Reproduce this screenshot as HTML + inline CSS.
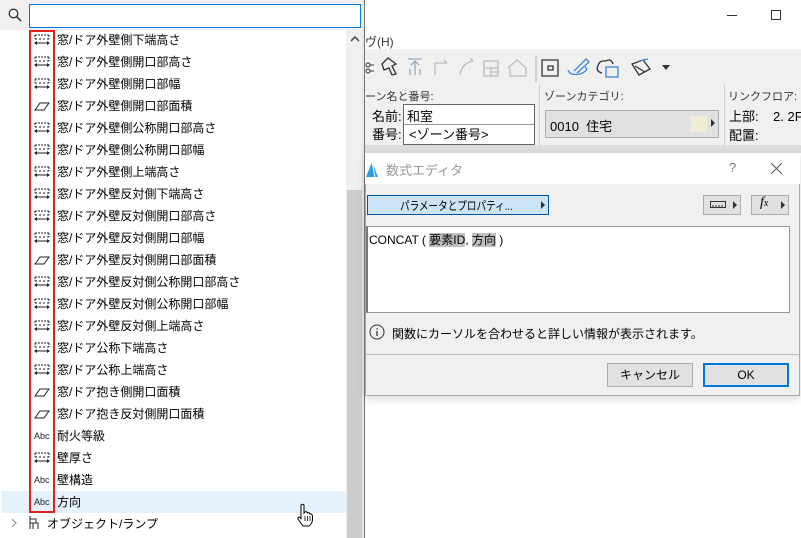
<!DOCTYPE html>
<html><head><meta charset="utf-8"><style>
*{margin:0;padding:0;box-sizing:border-box}
body{width:801px;height:538px;overflow:hidden;background:#fff;position:relative;font-family:"Liberation Sans","Noto Sans CJK JP",sans-serif;font-size:12px;color:#000}
.a{position:absolute}
.row{position:absolute;left:2px;width:344px;height:22px;line-height:22px}
.row span{position:absolute;left:55px;top:0;white-space:nowrap}
.ic{position:absolute;left:31px;top:4px;width:18px;height:14px}
.abc{position:absolute;left:32px;top:0;font-size:9px;color:#222}
.t{white-space:nowrap}
</style></head><body>
<div class="a" style="left:0;top:0;width:363px;height:30px;background:#f0f0f0"></div>
<svg class="a" style="left:8px;top:8px" width="14" height="14"><circle cx="5.5" cy="5.5" r="4.3" fill="none" stroke="#333" stroke-width="1.3"/><line x1="8.7" y1="8.7" x2="13" y2="13" stroke="#333" stroke-width="1.5"/></svg>
<div class="a" style="left:29px;top:4px;width:332px;height:24px;border:1px solid #0078d7;background:#fff"></div>
<div class="a" style="left:346px;top:30px;width:16px;height:508px;background:#f0f0f0"></div>
<div class="a" style="left:347px;top:190px;width:15px;height:348px;background:#cdcdcd"></div>
<svg class="a" style="left:350px;top:35px" width="10" height="8"><path d="M1 6 L5 2 L9 6" fill="none" stroke="#555" stroke-width="1.6"/></svg>
<div id="list"></div>
<div class="a" style="left:2px;top:491px;width:344px;height:22px;background:#e5f1fb"></div>
<div class="a" style="left:29px;top:30px;width:26px;height:483px;border:2px solid #e02020"></div>
<svg class="a" style="left:10px;top:518px" width="8" height="10"><path d="M2 1 L6 5 L2 9" fill="none" stroke="#999" stroke-width="1.2"/></svg>
<svg class="a" style="left:27px;top:515px" width="14" height="16"><path d="M3 1 V14 M3 8 H11 V14 M3 4 H9 V8 M6 8 V14" fill="none" stroke="#333" stroke-width="1.1"/></svg>
<div class="a t" style="left:47px;top:515px">オブジェクト/ランプ</div>
<svg class="a" style="left:296px;top:503px" width="18" height="24"><path d="M5 2 Q6.5 0.5 8 2 V10 L9 9 Q10.5 8 11.5 10 Q13 9 14 11 Q16 10.5 16.5 13 V17 Q16 21 13 23 H7 L2 16 Q1.5 14 3.5 14 L5 15.5 Z" fill="#fff" stroke="#000" stroke-width="1"/><path d="M9 13 V18 M11.5 13 V18 M14 13 V18" stroke="#000" stroke-width=".8"/></svg>
<div class="a" style="left:362px;top:0;width:2px;height:538px;background:#e8e8e8"></div>
<div class="a" style="left:364px;top:0;width:1px;height:538px;background:#777"></div>
<div class="a" style="left:727px;top:15px;width:10px;height:1px;background:#333"></div>
<div class="a" style="left:771px;top:10px;width:10px;height:10px;border:1px solid #333"></div>
<div class="a t" style="left:365px;top:33px;color:#333">ヴ(H)</div>
<div class="a" style="left:365px;top:49px;width:436px;height:36px;background:#f0f0f0"></div>
<svg class="a" style="left:365px;top:62px" width="10" height="12"><circle cx="3" cy="3" r="2" fill="none" stroke="#333"/><circle cx="3" cy="9" r="2" fill="none" stroke="#333"/><path d="M5 3H9M5 9H9" stroke="#333"/></svg>
<svg class="a" style="left:380px;top:56px" width="290" height="26" fill="none" stroke-width="1.3">
<path d="M2 8 L8 2 L16 8 L12 10 L16 18 L12 19 L9 12 L4 14 Z" stroke="#333"/>
<path d="M28 3 H42 M35 6 V19 M31 9 L35 5 L39 9 M30 13 V19 M40 13 V19" stroke="#9ab"/>
<path d="M55 19 V7 H67 M64 4 L67 7" stroke="#bbb"/>
<path d="M80 19 Q82 7 93 5 M90 2 L93 5" stroke="#bbb"/>
<path d="M104 5 H118 V20 H104 Z M104 12 H118 M111 12 V20 M112 16 H119" stroke="#bbb"/>
<path d="M128 12 L137 4 L146 12 V20 H130 V12" stroke="#bbb"/>
<line x1="156" y1="0" x2="156" y2="26" stroke="#bbb"/>
<path d="M162 4 H178 V20 H162 Z M168 10 H173 V14 H168 Z" stroke="#333"/>
<path d="M188 14 Q190 20 200 18 Q210 14 205 11 M194 15 L206 3 L209 6 L197 17" stroke="#3a86d8"/>
<path d="M222 17 Q215 15 218 10 Q219 4 226 5 Q231 2 233 8" stroke="#333"/><rect x="226" y="11" width="12" height="10" stroke="#3a86d8"/>
<path d="M252 8 L263 4 L270 13 L259 19 Z M255 10 L265 16" stroke="#333"/><path d="M259 5 L268 3" stroke="#3a86d8"/>
<path d="M282 9 L290 9 L286 14 Z" fill="#333" stroke="none"/>
</svg>
<div class="a" style="left:365px;top:85px;width:436px;height:62px;background:#f0f0f0"></div>
<div class="a t" style="left:365px;top:88px;font-size:11px;color:#333">ーン名と番号:</div>
<div class="a t" style="left:372px;top:106px;font-size:13px">名前:</div>
<div class="a t" style="left:372px;top:124px;font-size:13px">番号:</div>
<div class="a" style="left:403px;top:104px;width:132px;height:41px;border:1px solid #666;background:#fff"></div>
<div class="a" style="left:404px;top:124px;width:130px;height:1px;background:#999"></div>
<div class="a t" style="left:407px;top:106px;font-size:13px">和室</div>
<div class="a t" style="left:409px;top:124px;font-size:13px">&lt;ゾーン番号&gt;</div>
<div class="a" style="left:539px;top:85px;width:1px;height:60px;background:#ccc"></div>
<div class="a t" style="left:544px;top:88px;font-size:11px;color:#333">ゾーンカテゴリ:</div>
<div class="a" style="left:545px;top:110px;width:174px;height:28px;background:#e1e1e1;border:1px solid #adadad"></div>
<div class="a t" style="left:550px;top:116px;font-size:13px">0010&nbsp; 住宅</div>
<div class="a" style="left:691px;top:116px;width:16px;height:16px;background:#f1ecd4"></div>
<div class="a" style="left:711px;top:119px;border-left:4px solid #333;border-top:4px solid transparent;border-bottom:4px solid transparent"></div>
<div class="a" style="left:724px;top:85px;width:1px;height:60px;background:#ccc"></div>
<div class="a t" style="left:728px;top:88px;font-size:11px;color:#333">リンクフロア:</div>
<div class="a t" style="left:729px;top:106px;font-size:13px">上部:&nbsp;&nbsp;&nbsp;&nbsp;2. 2F</div>
<div class="a t" style="left:729px;top:125px;font-size:13px">配置:</div>
<div class="a" style="left:365px;top:145px;width:436px;height:8px;background:#dcdcdc"></div>
<div class="a" style="left:365px;top:153px;width:435px;height:243px;background:#f0f0f0;border:1px solid #aaa;box-shadow:0 3px 8px rgba(0,0,0,.15)"></div>
<div class="a" style="left:365px;top:153px;width:435px;height:31px;background:#fff"></div>
<svg class="a" style="left:366px;top:161px" width="14" height="16"><path d="M0 16 L6 1 L12 16 Z" fill="#2a9ee0"/><path d="M6 1 L9 16" stroke="#fff" stroke-width="1"/></svg>
<div class="a t" style="left:386px;top:160px;font-size:13px;color:#999">数式エディタ</div>
<div class="a t" style="left:729px;top:160px;font-size:13px;color:#777">?</div>
<svg class="a" style="left:771px;top:163px" width="11" height="11"><path d="M0 0 L11 11 M11 0 L0 11" stroke="#555" stroke-width="1"/></svg>
<div class="a" style="left:367px;top:195px;width:182px;height:20px;background:#cce4f7;border:1px solid #005499"></div>
<div class="a t" style="left:400px;top:197px;font-size:12px;transform:scaleX(.8);transform-origin:0 0">パラメータとプロパティ...</div>
<div class="a" style="left:541px;top:201px;border-left:4px solid #333;border-top:4px solid transparent;border-bottom:4px solid transparent"></div>
<div class="a" style="left:703px;top:195px;width:38px;height:20px;background:#e1e1e1;border:1px solid #adadad"></div>
<svg class="a" style="left:710px;top:201px" width="16" height="8"><rect x=".5" y=".5" width="15" height="6" fill="none" stroke="#333"/><path d="M3 4V7M6 4V7M9 4V7M12 4V7" stroke="#333"/></svg>
<div class="a" style="left:733px;top:201px;border-left:4px solid #333;border-top:4px solid transparent;border-bottom:4px solid transparent"></div>
<div class="a" style="left:751px;top:195px;width:38px;height:20px;background:#e1e1e1;border:1px solid #adadad"></div>
<div class="a t" style="left:760px;top:195px;font-size:14px;font-style:italic;font-family:'Liberation Serif',serif">f<span style="font-size:10px">x</span></div>
<div class="a" style="left:781px;top:201px;border-left:4px solid #333;border-top:4px solid transparent;border-bottom:4px solid transparent"></div>
<div class="a" style="left:366px;top:226px;width:424px;height:87px;background:#fff;border:1px solid #999;border-left:2px solid #777"></div>
<div class="a t" style="left:369px;top:231px;font-size:12px">CONCAT ( <span style="background:#c0c0c0">要素ID</span>, <span style="background:#c0c0c0">方向</span> )</div>
<svg class="a" style="left:369px;top:324px" width="16" height="16"><circle cx="8" cy="8" r="7" fill="none" stroke="#333"/><path d="M8 7V12M8 4.2V5.5" stroke="#333" stroke-width="1.3"/></svg>
<div class="a t" style="left:392px;top:325px;font-size:12px">関数にカーソルを合わせると詳しい情報が表示されます。</div>
<div class="a" style="left:366px;top:354px;width:433px;height:1px;background:#bbb"></div>
<div class="a" style="left:607px;top:363px;width:86px;height:24px;background:#e1e1e1;border:1px solid #adadad;text-align:center;line-height:22px">キャンセル</div>
<div class="a" style="left:703px;top:363px;width:86px;height:24px;background:#e1e1e1;border:2px solid #0078d7;text-align:center;line-height:20px">OK</div>
<script>
var d="d",A="a",T="t";
var it=[["窓/ドア外壁側下端高さ",d],["窓/ドア外壁側開口部高さ",d],["窓/ドア外壁側開口部幅",d],["窓/ドア外壁側開口部面積",A],["窓/ドア外壁側公称開口部高さ",d],["窓/ドア外壁側公称開口部幅",d],["窓/ドア外壁側上端高さ",d],["窓/ドア外壁反対側下端高さ",d],["窓/ドア外壁反対側開口部高さ",d],["窓/ドア外壁反対側開口部幅",d],["窓/ドア外壁反対側開口部面積",A],["窓/ドア外壁反対側公称開口部高さ",d],["窓/ドア外壁反対側公称開口部幅",d],["窓/ドア外壁反対側上端高さ",d],["窓/ドア公称下端高さ",d],["窓/ドア公称上端高さ",d],["窓/ドア抱き側開口面積",A],["窓/ドア抱き反対側開口面積",A],["耐火等級",T],["壁厚さ",d],["壁構造",T],["方向",T]];
var h="";
var dim='<svg class="ic" viewBox="0 0 18 14"><path d="M2 2H16M2 2V6M16 2V6M2 6H4M6 6H8M10 6H12M14 6H16" stroke="#222" stroke-dasharray="2 1" fill="none"/><path d="M2 10H16" stroke="#222"/><path d="M1 10L4 8V12ZM17 10L14 8V12Z" fill="#222"/></svg>';
var ar='<svg class="ic" viewBox="0 0 18 14"><path d="M2 11L7 4H16L11 11Z" fill="none" stroke="#222"/></svg>';
for(var i=0;i<it.length;i++){var ic=it[i][1]==d?dim:it[i][1]==A?ar:'<div class="abc">Abc</div>';
h+='<div class="row" style="top:'+(29+22*i)+'px;z-index:2">'+ic+'<span>'+it[i][0]+'</span></div>';}
document.getElementById("list").innerHTML=h;
</script>
</body></html>
